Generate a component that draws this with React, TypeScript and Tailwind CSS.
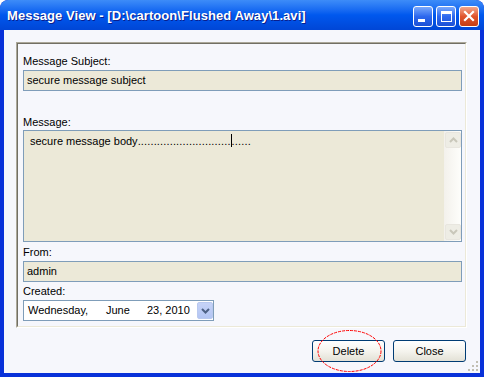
import { useState } from 'react';

const uiFont = { fontFamily: '"Liberation Sans", Arial, sans-serif' };

function TitleButton({ kind }: { kind: 'min' | 'max' | 'close' }) {
  const bg =
    kind === 'close'
      ? 'bg-gradient-to-b from-[#f0a58a] via-[#e0542c] to-[#c43d12]'
      : 'bg-gradient-to-b from-[#7aa8fb] via-[#2d68ee] to-[#1c50d6]';
  return (
    <div className={`w-[20px] h-[21px] rounded-[3px] border border-white flex items-center justify-center ${bg}`}>
      {kind === 'min' && <div className="w-[7px] h-[3px] bg-white mt-[8px] mr-[3px]" />}
      {kind === 'max' && <div className="w-[11px] h-[11px] border border-white border-t-[3px]" />}
      {kind === 'close' && (
        <svg width="12" height="12" viewBox="0 0 12 12">
          <path d="M2 2 L10 10 M10 2 L2 10" stroke="white" strokeWidth="2.2" strokeLinecap="square" />
        </svg>
      )}
    </div>
  );
}

function Label({ children, className = '' }: { children: string; className?: string }) {
  return <div className={`text-[11px] leading-[13px] text-black ${className}`}>{children}</div>;
}

function Field({ value }: { value: string }) {
  return (
    <div className="h-[21px] border border-[#7f9db9] bg-[#ece9d8] px-[3px] flex items-center text-[11px] text-black">
      {value}
    </div>
  );
}

function ScrollArrow({ up }: { up: boolean }) {
  return (
    <div className="w-[16px] h-[16px] rounded-[2px] border border-[#e8e6df] bg-[#eeede5] flex items-center justify-center">
      <svg width="9" height="6" viewBox="0 0 9 6">
        <path d={up ? 'M1 5 L4.5 1.5 L8 5' : 'M1 1 L4.5 4.5 L8 1'} stroke="#c9c7ba" strokeWidth="2" fill="none" />
      </svg>
    </div>
  );
}

function XpButton({ label }: { label: string }) {
  return (
    <button className="w-[73px] h-[22px] rounded-[3px] border border-[#003c74] bg-gradient-to-b from-white via-[#f5f4ee] to-[#e3e1d6] text-[11px] text-black">
      {label}
    </button>
  );
}

export default function App() {
  const [dots] = useState('.'.repeat(29));
  return (
    <div className="relative w-[484px] h-[377px] bg-[#0831d9] rounded-t-[8px] flex flex-col overflow-hidden" style={uiFont}>
      {/* title bar */}
      <div className="h-[30px] shrink-0 rounded-t-[8px] bg-gradient-to-b from-[#3d8cf8] via-[#0058ee] to-[#0046d6] flex items-center pl-[7px] pr-[5px]">
        <div className="text-white font-bold text-[13px] tracking-[0.06px] [text-shadow:1px_1px_0_#0a1e8c] flex-1 mt-[1px]">
          Message View - [D:\cartoon\Flushed Away\1.avi]
        </div>
        <div className="flex gap-[3px] mt-[2px]">
          <TitleButton kind="min" />
          <TitleButton kind="max" />
          <TitleButton kind="close" />
        </div>
      </div>

      {/* client area */}
      <div className="flex-1 mx-[4px] mb-[4px] bg-[#f6f7fc] relative flex flex-col pt-[12px] pl-[12px] pr-[13px]">
        <div className="h-[286px] border-t border-l border-[#aca899] border-r border-b border-r-white border-b-white">
          <div className="h-full border-t border-l border-[#716f64] border-r border-b border-r-[#ece9d8] border-b-[#ece9d8] pl-[5px] pr-[3px] pt-[11px] flex flex-col">
            <Label>Message Subject:</Label>
            <div className="mt-[2px]">
              <Field value="secure message subject" />
            </div>
            <Label className="mt-[25px]">Message:</Label>
            <div className="mt-[1px] h-[112px] border border-[#7f9db9] bg-[#ece9d8] flex">
              <div className="flex-1 pl-[6px] pt-[3px] text-[11px] leading-[14px] text-black">
                <span>secure message body</span>
                <span className="tracking-[0.15px]">{dots}</span>
                <span className="inline-block w-[1px] h-[13px] bg-black align-[-2px]" />
                <span className="tracking-[0.15px]">......</span>
              </div>
              <div className="w-[17px] bg-gradient-to-r from-[#f3f1ec] to-[#fefefb] flex flex-col justify-between p-[1px]">
                <ScrollArrow up />
                <ScrollArrow up={false} />
              </div>
            </div>
            <Label className="mt-[4px]">From:</Label>
            <div className="mt-[2px]">
              <Field value="admin" />
            </div>
            <Label className="mt-[3px]">Created:</Label>
            <div className="mt-[2px] w-[191px] h-[21px] border border-[#7f9db9] bg-white flex items-center text-[11px] text-black">
              <span className="ml-[4px] w-[78px]">Wednesday,</span>
              <span className="w-[41px]">June</span>
              <span className="w-[50px]">23, 2010</span>
              <div className="w-[16px] h-[17px] rounded-[2px] bg-gradient-to-b from-[#c6d3f7] to-[#b3c5f3] border border-[#b9c9ef] flex items-center justify-center">
                <svg width="9" height="6" viewBox="0 0 9 6">
                  <path d="M1 1 L4.5 4.5 L8 1" stroke="#4d6185" strokeWidth="2" fill="none" />
                </svg>
              </div>
            </div>
          </div>
        </div>

        <div className="mt-[12px] flex justify-end gap-[8px] pr-[1px]">
          <XpButton label="Delete" />
          <XpButton label="Close" />
        </div>

        {/* resize grip */}
        <svg className="absolute right-[1px] bottom-[1px]" width="11" height="11" viewBox="0 0 11 11">
          {[
            [8, 0], [8, 4], [4, 4], [8, 8], [4, 8], [0, 8],
          ].map(([x, y], i) => (
            <rect key={i} x={x} y={y} width="2" height="2" fill="#c2bfb3" />
          ))}
        </svg>
      </div>

      {/* red annotation ellipse */}
      <svg className="absolute left-0 top-0 pointer-events-none" width="484" height="377">
        <ellipse cx="349.5" cy="351" rx="31.5" ry="20.5" fill="none" stroke="#ff0000" strokeWidth="1" strokeDasharray="3 1" />
      </svg>
    </div>
  );
}
